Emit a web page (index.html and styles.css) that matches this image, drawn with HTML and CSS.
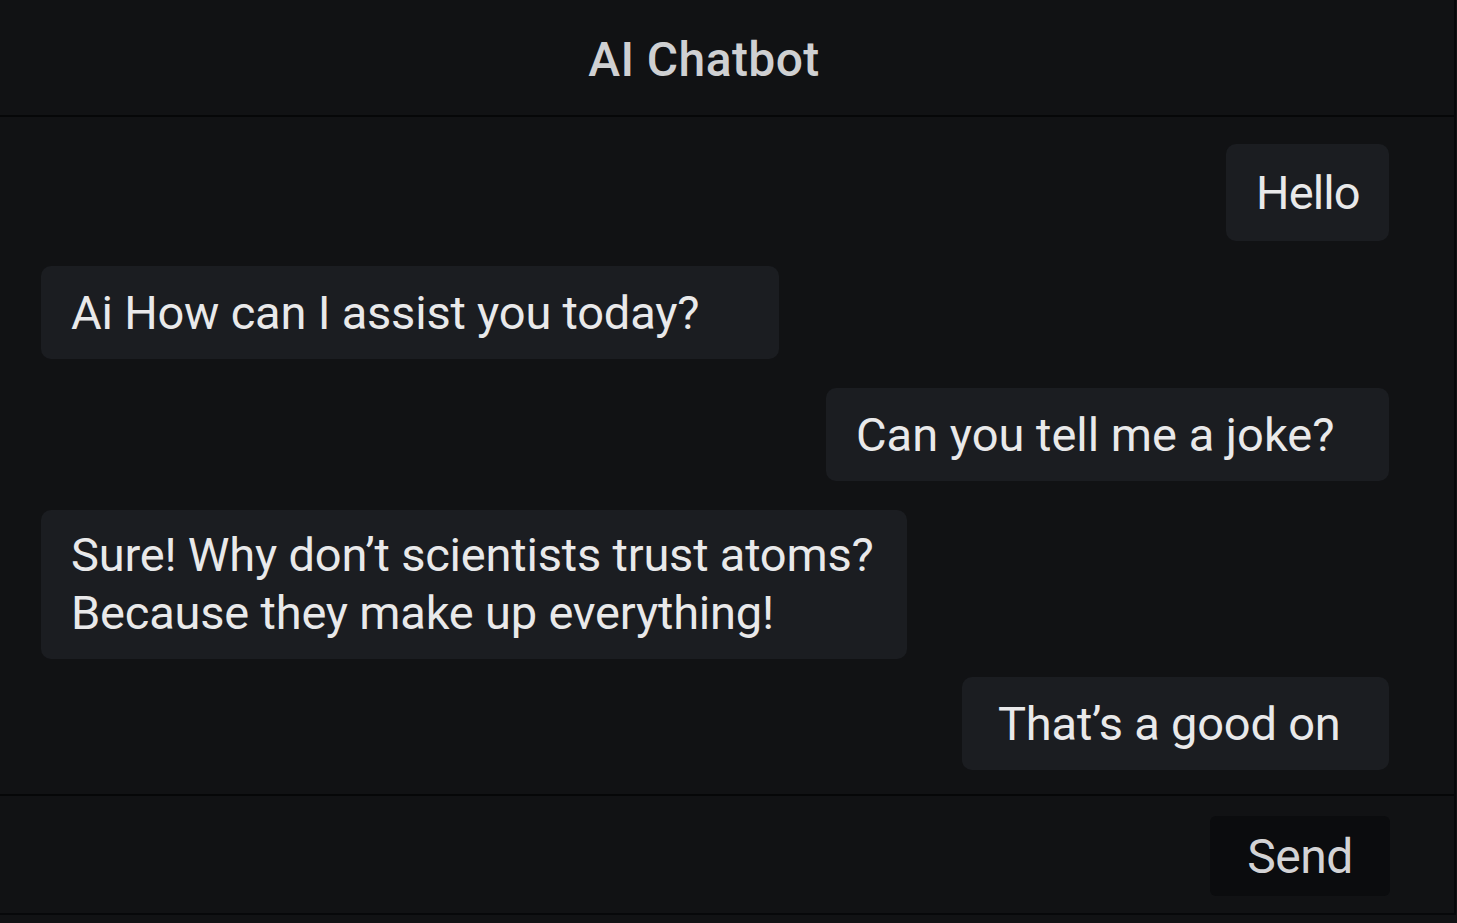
FILE: index.html
```html
<!DOCTYPE html>
<html lang="en">
<head>
<meta charset="utf-8">
<title>AI Chatbot</title>
<link rel="stylesheet" href="styles.css">
</head>
<body>
<div class="app">
  <header class="header">
    <h1 class="title">AI Chatbot</h1>
  </header>
  <main class="messages">
    <div class="msg user m1">Hello</div>
    <div class="msg bot m2">Ai How can I assist you today?</div>
    <div class="msg user m3">Can you tell me a joke?</div>
    <div class="msg bot m4">Sure! Why don’t scientists trust atoms?<br>Because they make up everything!</div>
    <div class="msg user m5">That’s a good on</div>
  </main>
  <footer class="composer">
    <button class="send" type="button">Send</button>
  </footer>
</div>
</body>
</html>
```
FILE: styles.css
```css
* { box-sizing: border-box; }
html, body {
  margin: 0;
  height: 100%;
  background: #111214;
}
body {
  font-family: Roboto, "Liberation Sans", sans-serif;
  color: #e9e9ea;
}
.app {
  width: 1456px;
  height: 915px;
  display: flex;
  flex-direction: column;
  border-right: 2px solid #07080a;
  border-bottom: 2px solid #07080a;
}
.header {
  height: 117px;
  flex: none;
  display: flex;
  align-items: center;
  justify-content: center;
  padding-right: 46px;
  border-bottom: 2px solid #060708;
}
.title {
  margin: 0;
  font-size: 48px;
  font-weight: 500;
  letter-spacing: 0.4px;
  color: #cfd0d2;
  padding-top: 4px;
}
.messages {
  flex: 1;
  display: flex;
  flex-direction: column;
  align-items: flex-start;
  gap: 25px;
  padding: 27px 65px 0 41px;
}
.msg {
  background: #1b1d21;
  border-radius: 10px;
  font-size: 47px;
  letter-spacing: -0.2px;
  line-height: 58px;
  padding: 18px 30px 17px 30px;
  white-space: nowrap;
}
.user { align-self: flex-end; }
.m1 { height: 97px; width: 163px; padding-top: 20px; letter-spacing: -0.9px; }
.m2 { width: 738px; margin-bottom: 4px; }
.m3 { width: 563px; margin-bottom: 4px; letter-spacing: 0; }
.m4 { width: 866px; padding-top: 16px; }
.m5 { width: 427px; padding-left: 36px; margin-top: -7px; }
.composer {
  height: 119px;
  flex: none;
  border-top: 2px solid #060708;
  display: flex;
  justify-content: flex-end;
  align-items: flex-start;
  padding: 20px 64px 0 0;
}
.send {
  width: 180px;
  height: 80px;
  background: #0b0c0e;
  border: none;
  border-radius: 6px;
  color: #d3d3d5;
  font-family: Roboto, "Liberation Sans", sans-serif;
  font-size: 48px;
  letter-spacing: -0.5px;
  padding: 0;
}
```
